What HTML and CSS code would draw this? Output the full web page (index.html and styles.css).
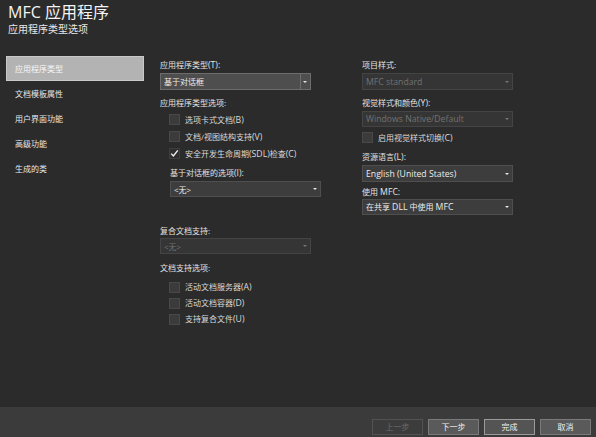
FILE: index.html
```html
<!DOCTYPE html>
<html lang="zh-CN">
<head>
<meta charset="utf-8">
<title>MFC 应用程序</title>
<link rel="stylesheet" href="styles.css">
</head>
<body>
<div class="window">
  <header class="header">
    <div class="title">MFC 应用程序</div>
    <div class="subtitle">应用程序类型选项</div>
  </header>
  <div class="main">
    <nav class="sidebar">
      <div class="nav-item selected">应用程序类型</div>
      <div class="nav-item">文档模板属性</div>
      <div class="nav-item">用户界面功能</div>
      <div class="nav-item">高级功能</div>
      <div class="nav-item">生成的类</div>
    </nav>
    <section class="col col-mid">
      <div class="label l-first">应用程序类型<span class="en">(T):</span></div>
      <div class="select select-main h17 mt2"><span class="val">基于对话框</span><span class="sep"></span><span class="arrow"></span></div>
      <div class="label mt7">应用程序类型选项:</div>
      <div class="checks mt2">
        <div class="check-row r17"><span class="box"></span><span class="ctext">选项卡式文档<span class="en">(B)</span></span></div>
        <div class="check-row r17"><span class="box"></span><span class="ctext">文档/视图结构支持<span class="en">(V)</span></span></div>
        <div class="check-row r17"><span class="box checked"><svg viewBox="0 0 11 11" width="11" height="11"><polyline points="2.2,5.6 4.4,8 8.8,2.4" fill="none" stroke="#f2f2f2" stroke-width="1.4"/></svg></span><span class="ctext">安全开发生命周期<span class="en">(SDL)</span>检查<span class="en">(C)</span></span></div>
      </div>
      <div class="label indent mt5">基于对话框的选项<span class="en">(I):</span></div>
      <div class="select select-normal indent-sel h16 mt2"><span class="val">&lt;无&gt;</span><span class="arrow"></span></div>
      <div class="label mt28">复合文档支持:</div>
      <div class="select select-disabled h16 mt1"><span class="val">&lt;无&gt;</span><span class="arrow dim"></span></div>
      <div class="label mt8">文档支持选项:</div>
      <div class="checks mt5">
        <div class="check-row r16"><span class="box"></span><span class="ctext">活动文档服务器<span class="en">(A)</span></span></div>
        <div class="check-row r16"><span class="box"></span><span class="ctext">活动文档容器<span class="en">(D)</span></span></div>
        <div class="check-row r16"><span class="box"></span><span class="ctext">支持复合文件<span class="en">(U)</span></span></div>
      </div>
    </section>
    <section class="col col-right">
      <div class="label l-first">项目样式:</div>
      <div class="select select-disabled h17 mt2"><span class="val en">MFC standard</span><span class="arrow dim"></span></div>
      <div class="label mt7">视觉样式和颜色<span class="en">(Y):</span></div>
      <div class="select select-disabled h16 mt2"><span class="val en">Windows Native/Default</span><span class="arrow dim"></span></div>
      <div class="checks mt2">
        <div class="check-row r17 flush"><span class="box"></span><span class="ctext">启用视觉样式切换<span class="en">(C)</span></span></div>
      </div>
      <div class="label mt5">资源语言<span class="en">(L):</span></div>
      <div class="select select-normal h17 mt2"><span class="val en">English (United States)</span><span class="arrow"></span></div>
      <div class="label mt4">使用 <span class="en">MFC:</span></div>
      <div class="select select-normal h16 mt1"><span class="val">在共享 <span class="en">DLL</span> 中使用 <span class="en">MFC</span></span><span class="arrow"></span></div>
    </section>
  </div>
  <footer class="footer">
    <button class="btn disabled">上一步</button>
    <button class="btn">下一步</button>
    <button class="btn default">完成</button>
    <button class="btn">取消</button>
  </footer>
</div>
</body>
</html>
```
FILE: styles.css
```css
* { box-sizing: border-box; }
html, body { margin: 0; padding: 0; }
body {
  width: 596px;
  height: 437px;
  overflow: hidden;
  background: #2b2b2b;
  font-family: "Open Sans", "Noto Sans CJK SC", sans-serif;
  color: #e6e6e6;
}
.window {
  width: 596px;
  height: 437px;
  display: flex;
  flex-direction: column;
}
.header {
  height: 56px;
  padding: 3px 0 0 8px;
}
.title {
  font-size: 16px;
  line-height: 18px;
  color: #f4f4f4;
}
.subtitle {
  margin-top: 2px;
  font-size: 10px;
  line-height: 12px;
  color: #e8e8e8;
}
.main {
  flex: 1;
  display: flex;
  align-items: flex-start;
}
.sidebar {
  width: 160px;
  padding-left: 6px;
  display: flex;
  flex-direction: column;
}
.nav-item {
  width: 138px;
  height: 25px;
  line-height: 23px;
  font-size: 8px;
  padding-left: 8px;
  border: 1px solid transparent;
  color: #e8e8e8;
}
.nav-item.selected {
  background: #b3b3b3;
  border-color: #c9c9c9;
  color: #f8f8f8;
}
.col {
  display: flex;
  flex-direction: column;
  width: 152px;
}
.col-mid { margin-right: 50px; }
.en { font-size: 8.7px; }
.label {
  height: 12px;
  line-height: 12px;
  font-size: 8px;
  color: #e4e4e4;
  white-space: nowrap;
}
.l-first { margin-top: 3px; }
.indent { margin-left: 10px; }
.mt1 { margin-top: 1px; }
.mt2 { margin-top: 2px; }
.mt4 { margin-top: 4px; }
.mt5 { margin-top: 5px; }
.mt7 { margin-top: 7px; }
.mt8 { margin-top: 8px; }
.mt28 { margin-top: 28px; }
.select {
  display: flex;
  align-items: center;
  width: 151px;
  font-size: 8px;
  padding-left: 3px;
  border: 1px solid #555;
  white-space: nowrap;
}
.h17 { height: 17px; }
.h16 { height: 16px; }
.select .val { flex: 1; }
.select-main {
  background: #4e4e4e;
  border-color: #6c6c6c;
  color: #efefef;
}
.select-main .sep {
  width: 1px;
  align-self: stretch;
  background: #6e6e6e;
  margin-right: 2px;
}
.select-normal {
  background: #3d3d3d;
  border-color: #4f4f4f;
  color: #ececec;
}
.indent-sel { margin-left: 10px; }
.select-disabled {
  background: #353535;
  border-color: #444444;
  color: #727272;
}
.arrow {
  width: 0;
  height: 0;
  border-left: 2px solid transparent;
  border-right: 2px solid transparent;
  border-top: 2px solid #e6e6e6;
  margin-right: 3px;
}
.arrow.dim { border-top-color: #777; }
.checks {
  display: flex;
  flex-direction: column;
}
.check-row {
  display: flex;
  align-items: center;
  padding-left: 9px;
  font-size: 8px;
  color: #dadada;
  white-space: nowrap;
}
.check-row.flush { padding-left: 0; }
.r17 { height: 17px; }
.r16 { height: 16px; }
.box {
  width: 11px;
  height: 11px;
  background: #3b3b3b;
  border: 1px solid #484848;
  margin-right: 5px;
  flex: none;
  display: flex;
}
.box.checked {
  background: #2e2e2e;
  border-color: #3e3e3e;
}
.box svg { margin: -1px; }
.footer {
  height: 30px;
  background: #3b3b3b;
  display: flex;
  justify-content: flex-end;
  align-items: flex-start;
  padding: 12px 5px 0 0;
  gap: 5px;
}
.btn {
  width: 51px;
  height: 16px;
  margin: 0;
  padding: 0;
  font-family: "Open Sans", "Noto Sans CJK SC", sans-serif;
  font-size: 8px;
  line-height: 14px;
  color: #f0f0f0;
  background: #5a5a5a;
  border: 1px solid #7a7a7a;
}
.btn.default { border-color: #9a9a9a; background: #545454; }
.btn.disabled {
  background: #3c3c3c;
  border-color: #525252;
  color: #6c6c6c;
}
```
